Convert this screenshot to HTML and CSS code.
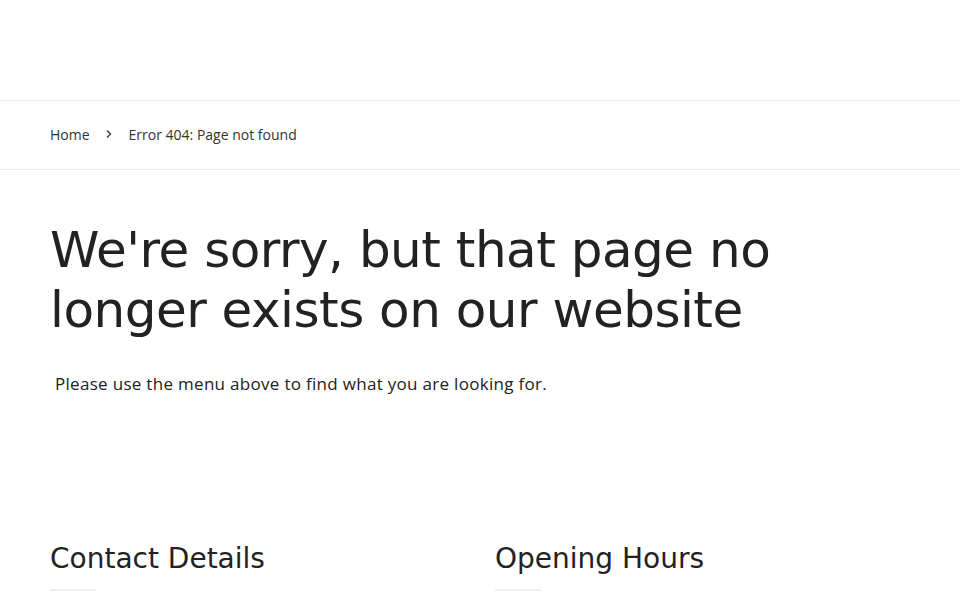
FILE: index.html
```html
<!DOCTYPE html>
<html lang="en">
<head>
<meta charset="utf-8">
<title>Page not found</title>
<link rel="stylesheet" href="styles.css">
</head>
<body>
<header class="site-header"></header>
<nav class="breadcrumbs">
  <div class="wrap crumbs">
    <a class="crumb" href="#">Home</a>
    <svg class="sep" width="8" height="10" viewBox="0 0 8 10" aria-hidden="true"><path d="M2 1.5 L5.5 5 L2 8.5" fill="none" stroke="#444" stroke-width="1.5"/></svg>
    <span class="crumb current">Error 404: Page not found</span>
  </div>
</nav>
<main class="wrap content">
  <h1 class="title">We're sorry, but that page no longer exists on our website</h1>
  <p class="lead">Please use the menu above to find what you are looking for.</p>
</main>
<section class="wrap footer-cols">
  <div class="col">
    <h2 class="col-title">Contact Details</h2>
    <div class="rule"></div>
  </div>
  <div class="col">
    <h2 class="col-title">Opening Hours</h2>
    <div class="rule"></div>
  </div>
</section>
</body>
</html>
```
FILE: styles.css
```css
* { box-sizing: border-box; }
html, body { margin: 0; padding: 0; background: #fff; }
body {
  font-family: "DejaVu Sans", "Noto Sans", sans-serif;
  color: #222;
  overflow: hidden;
}
.wrap { padding: 0 50px; }
.site-header { height: 101px; border-bottom: 1px solid #ebebeb; }
.breadcrumbs { border-bottom: 1px solid #ebebeb; height: 69px; }
.crumbs { display: flex; align-items: center; height: 100%; padding-bottom: 2px; font-size: 14px; font-family: "Open Sans", sans-serif; }
.crumb { color: #333; text-decoration: none; }
.sep { margin: 0 16px 0 15px; }
.content { padding-top: 50px; }
.title {
  font-family: "DejaVu Sans", sans-serif;
  font-weight: 400;
  font-size: 50px;
  line-height: 60px;
  margin: 0;
  letter-spacing: -0.5px;
  max-width: 780px;
  color: #222;
}
.lead { margin: 32px 0 0 5px; font-size: 17px; letter-spacing: 0.3px; font-family: "Open Sans", sans-serif; color: #222; }
.footer-cols { display: grid; grid-template-columns: 1fr 1fr; column-gap: 30px; padding-top: 146px; }
.col-title { font-family: "DejaVu Sans", sans-serif; font-weight: 400; font-size: 28px; margin: 0; line-height: 36px; color: #222; }
.rule { width: 46px; height: 2px; background: #eee; margin-top: 12px; }
```
